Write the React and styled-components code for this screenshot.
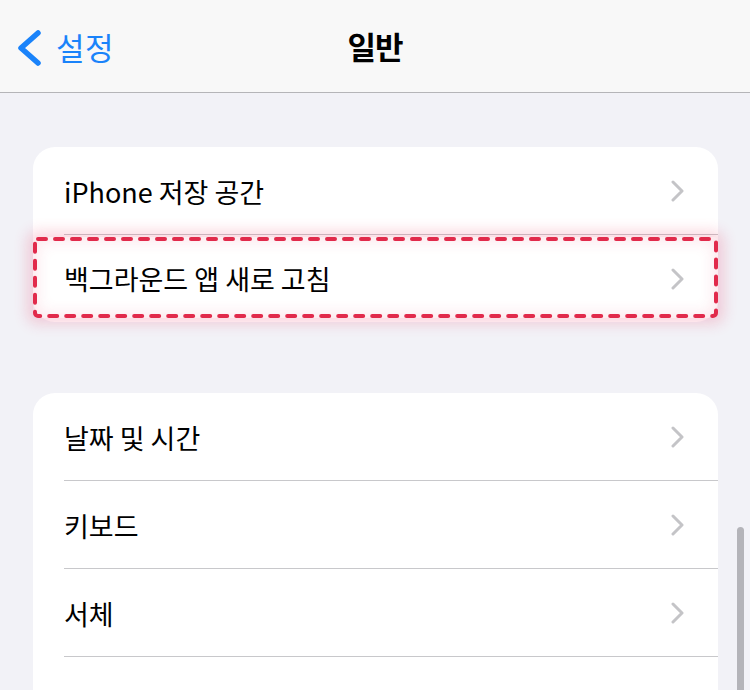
import React from "react";
import styled, { createGlobalStyle } from "styled-components";

const GlobalStyle = createGlobalStyle`
  html, body {
    margin: 0;
    padding: 0;
    background: #f2f2f7;
    font-family: "Noto Sans CJK KR", "Noto Sans", "Liberation Sans", sans-serif;
    -webkit-font-smoothing: antialiased;
  }
`;

const Screen = styled.div`
  position: relative;
  width: 750px;
  height: 690px;
  overflow: hidden;
  background: #f2f2f7;
`;

const NavBar = styled.header`
  position: relative;
  height: 93px;
  box-sizing: border-box;
  display: flex;
  align-items: center;
  justify-content: center;
  background: #f8f8f8;
  border-bottom: 1px solid #b5b5b8;
`;

const BackButton = styled.button`
  position: absolute;
  left: 15px;
  top: 27px;
  display: flex;
  align-items: center;
  gap: 15px;
  padding: 0;
  border: none;
  background: none;
  color: #1a83fa;
  font-family: inherit;
  font-size: 31px;
  font-weight: 400;
  letter-spacing: 0.5px;
  line-height: 40px;
  cursor: pointer;
`;

const Title = styled.h1`
  margin: 0;
  font-size: 31px;
  font-weight: 700;
  letter-spacing: -1px;
  color: #000;
  line-height: 40px;
`;

const Content = styled.main`
  display: flex;
  flex-direction: column;
  gap: 71px;
  padding: 54px 32px 0 33px;
`;

const Card = styled.section`
  background: #fff;
  border-radius: 22px;
`;

const Row = styled.div`
  position: relative;
  height: ${(p) => (p.$last ? "87px" : "88px")};
  box-sizing: border-box;
  display: flex;
  align-items: center;
  justify-content: space-between;
  padding: 0 34px 0 31px;

  &::after {
    content: "";
    display: ${(p) => (p.$last ? "none" : "block")};
    position: absolute;
    left: 31px;
    right: 0;
    bottom: 0;
    height: 1px;
    background: #c8c8cb;
  }
`;

const Label = styled.span`
  font-size: 27px;
  font-weight: 400;
  letter-spacing: 0;
  color: #000;
`;

const Highlight = styled.div`
  position: absolute;
  left: 0;
  right: 0;
  top: 2px;
  bottom: 4px;
  pointer-events: none;
  border-radius: 4px;
  box-shadow: 0 0 14px 6px rgba(236, 50, 95, 0.2),
    inset 0 0 16px 3px rgba(236, 50, 95, 0.14);

  svg {
    display: block;
    width: 100%;
    height: 100%;
    overflow: visible;
  }
`;

const ScrollIndicator = styled.div`
  position: absolute;
  right: 6px;
  top: 527px;
  width: 7px;
  height: 200px;
  border-radius: 4px;
  background: #b4b4b9;
`;

const BackChevron = () => (
  <svg width="26" height="40" viewBox="0 0 26 40">
    <path
      d="M23 6 L6 21 L23 36"
      fill="none"
      stroke="#1a83fa"
      strokeWidth="5.5"
      strokeLinecap="round"
      strokeLinejoin="round"
    />
  </svg>
);

const Chevron = () => (
  <svg width="13" height="22" viewBox="0 0 13 22">
    <path
      d="M2 2 L11 11 L2 20"
      fill="none"
      stroke="#c4c4c7"
      strokeWidth="3"
      strokeLinecap="round"
      strokeLinejoin="round"
    />
  </svg>
);

const DashedBox = () => (
  <svg preserveAspectRatio="none">
    <rect
      x="2"
      y="2"
      width="calc(100% - 4px)"
      height="calc(100% - 4px)"
      rx="3"
      fill="none"
      stroke="#e12a4b"
      strokeWidth="4"
      strokeDasharray="8 9"
      strokeLinecap="round"
    />
  </svg>
);

const groups = [
  [{ label: "iPhone 저장 공간" }, { label: "백그라운드 앱 새로 고침", highlight: true }],
  [{ label: "날짜 및 시간" }, { label: "키보드" }, { label: "서체" }, { label: "" }],
];

export default function App() {
  return (
    <>
      <GlobalStyle />
      <Screen>
        <NavBar>
          <BackButton>
            <BackChevron />
            설정
          </BackButton>
          <Title>일반</Title>
        </NavBar>
        <Content>
          {groups.map((rows, gi) => (
            <Card key={gi}>
              {rows.map((row, i) => (
                <Row key={i} $last={gi === 0 && i === rows.length - 1}>
                  <Label>{row.label}</Label>
                  {row.label && <Chevron />}
                  {row.highlight && (
                    <Highlight>
                      <DashedBox />
                    </Highlight>
                  )}
                </Row>
              ))}
            </Card>
          ))}
        </Content>
        <ScrollIndicator />
      </Screen>
    </>
  );
}
